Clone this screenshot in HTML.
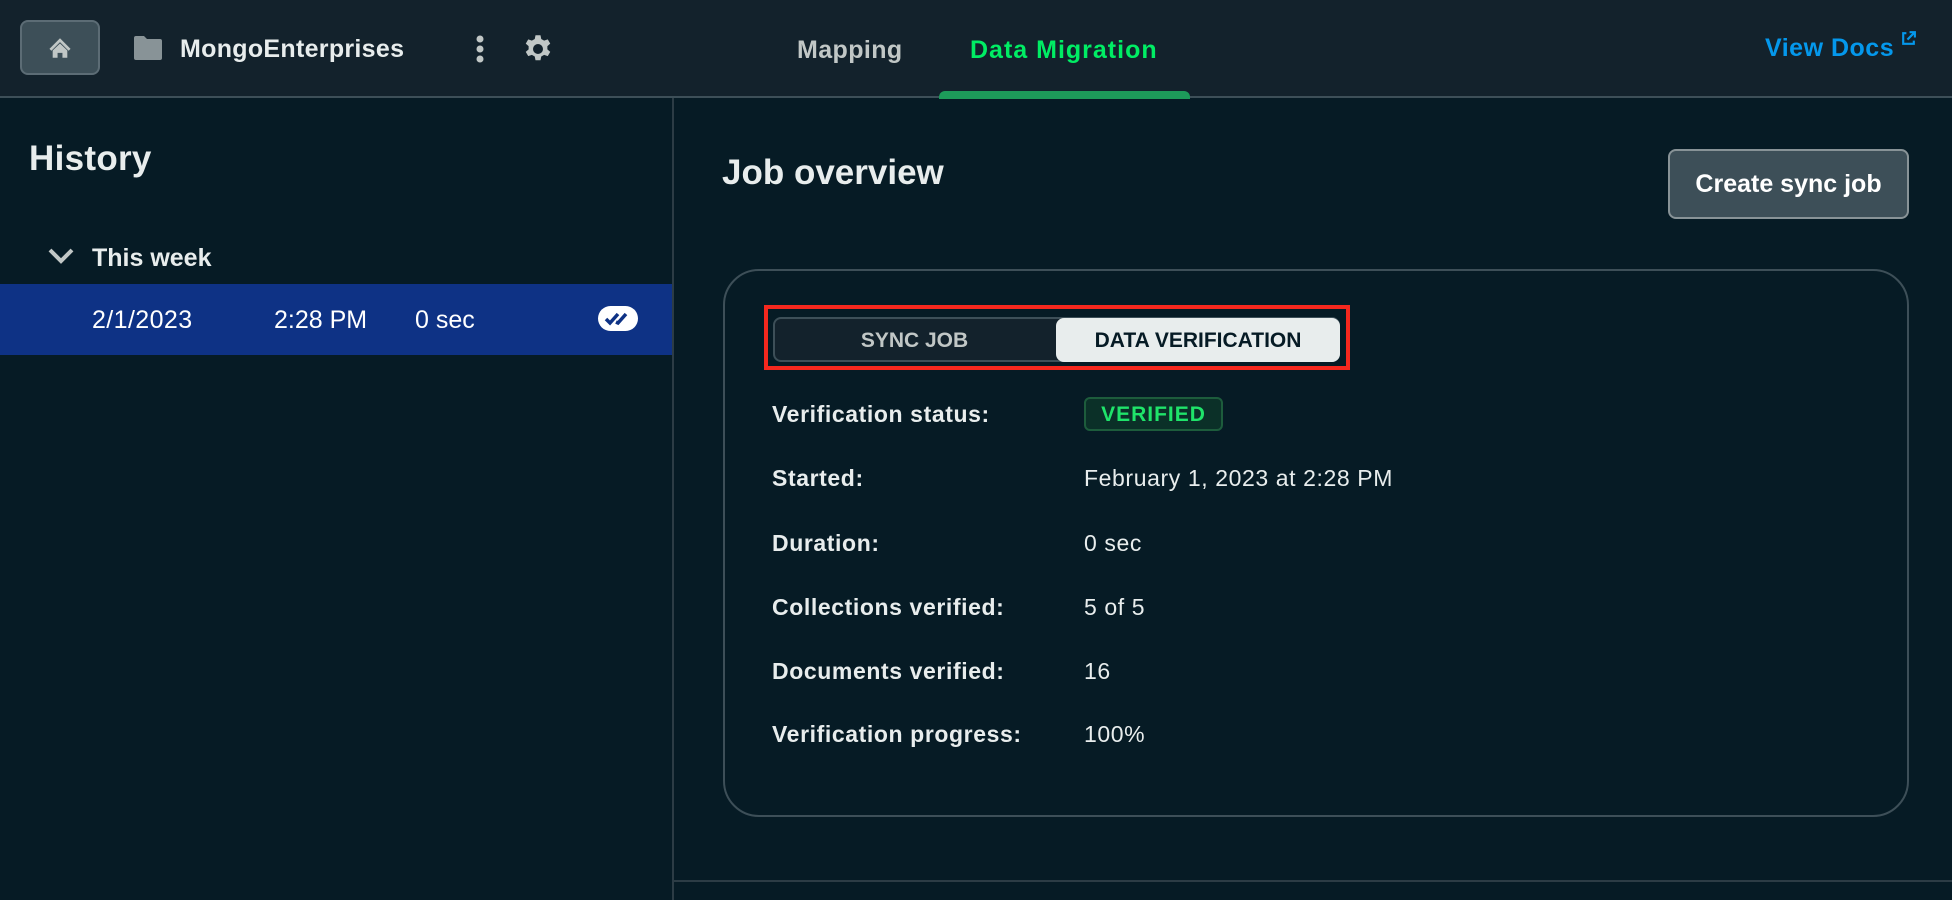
<!DOCTYPE html>
<html><head><meta charset="utf-8"><style>
*{margin:0;padding:0;box-sizing:border-box}
body{width:1952px;height:900px;background:#061b25;font-family:"Liberation Sans",sans-serif;color:#e8eded;position:relative;overflow:hidden}
.abs{position:absolute}
.hdr{left:0;top:0;width:1952px;height:98px;background:#13222c;border-bottom:2px solid #3d4f58}
.b{font-weight:bold}
.row{left:772px;font-size:23px;font-weight:bold;color:#e8eded;letter-spacing:0.6px}
.val{left:1084px;font-size:23px;color:#e8eded;letter-spacing:0.6px}
</style></head><body>
<div class="abs hdr"></div>
<div class="abs" style="left:20px;top:20px;width:80px;height:55px;border:2px solid #5c6c75;border-radius:8px;background:#3d4f58"></div>
<svg class="abs" style="left:47px;top:35px" width="26" height="26" viewBox="0 0 16 16"><path d="M8 2L1.5 8.5l1.2 1.2L8 4.4l5.3 5.3 1.2-1.2z" fill="#c1c7c6"/><path d="M3.5 9.5L8 5.2l4.5 4.3V14H9.5v-3h-3v3h-3z" fill="#c1c7c6"/></svg>
<svg class="abs" style="left:134px;top:36px" width="28" height="24" viewBox="0 0 28 24"><path d="M0 2a2 2 0 012-2h8l3 3h13a2 2 0 012 2v17a2 2 0 01-2 2H2a2 2 0 01-2-2z" fill="#889397"/></svg>
<div class="abs b" style="left:180px;top:35px;font-size:25px;color:#e8eded;letter-spacing:0.3px">MongoEnterprises</div>
<svg class="abs" style="left:474px;top:34px" width="12" height="30"><circle cx="6" cy="5" r="3.5" fill="#c1c7c6"/><circle cx="6" cy="15" r="3.5" fill="#c1c7c6"/><circle cx="6" cy="25" r="3.5" fill="#c1c7c6"/></svg>
<svg class="abs" style="left:523px;top:34px" width="30" height="30" viewBox="0 0 24 24"><path fill="#c1c7c6" fill-rule="evenodd" d="M10 1h4l.6 3 2.3 1.3 2.9-1 2 3.4-2.3 2v2.6l2.3 2-2 3.4-2.9-1-2.3 1.3-.6 3h-4l-.6-3-2.3-1.3-2.9 1-2-3.4 2.3-2V9.7l-2.3-2 2-3.4 2.9 1L9.4 4zM12 8a4 4 0 100 8 4 4 0 000-8z"/></svg>
<div class="abs b" style="left:797px;top:36px;font-size:25px;color:#c1c7c6;letter-spacing:0.4px">Mapping</div>
<div class="abs b" style="left:970px;top:36px;font-size:25px;color:#00ed64;letter-spacing:1px">Data Migration</div>
<div class="abs" style="left:939px;top:91px;width:251px;height:8px;background:#1d9b5a;border-radius:6px 6px 0 0"></div>
<div class="abs b" style="left:1765px;top:34px;font-size:25px;color:#0498ec;letter-spacing:0.5px">View Docs</div>
<svg class="abs" style="left:1900px;top:30px" width="17" height="17" viewBox="0 0 16 16"><path d="M6 3H3v10h10v-3" stroke="#0498ec" stroke-width="2" fill="none"/><path d="M9 2h5v5M14 2L7 9" stroke="#0498ec" stroke-width="2" fill="none"/></svg>

<div class="abs" style="left:672px;top:98px;width:2px;height:802px;background:#2c3c45"></div>
<div class="abs" style="left:674px;top:880px;width:1278px;height:2px;background:#2c3c45"></div>

<div class="abs b" style="left:29px;top:139px;font-size:35px;letter-spacing:0.3px">History</div>
<svg class="abs" style="left:47px;top:246px" width="28" height="20" viewBox="0 0 28 20"><path d="M3 4l11 11L25 4" stroke="#c1c7c6" stroke-width="4" fill="none"/></svg>
<div class="abs b" style="left:92px;top:244px;font-size:25px">This week</div>
<div class="abs" style="left:0;top:284px;width:672px;height:71px;background:#0e3285"></div>
<div class="abs" style="left:92px;top:306px;font-size:25px;color:#fff;letter-spacing:0.4px">2/1/2023</div>
<div class="abs" style="left:274px;top:306px;font-size:25px;color:#fff">2:28 PM</div>
<div class="abs" style="left:415px;top:306px;font-size:25px;color:#fff">0 sec</div>
<svg class="abs" style="left:598px;top:306px" width="40" height="25" viewBox="0 0 40 25"><rect width="40" height="25" rx="12.5" fill="#fff"/><path d="M8 13l4 4 8-9M18 16l2 1 8-9" stroke="#0e3285" stroke-width="3.5" fill="none"/></svg>

<div class="abs b" style="left:722px;top:153px;font-size:35px">Job overview</div>
<div class="abs b" style="left:1668px;top:149px;width:241px;height:70px;background:#3d4f58;border:2px solid #889397;border-radius:8px;font-size:25px;text-align:center;line-height:66px;color:#fff">Create sync job</div>
<div class="abs" style="left:723px;top:269px;width:1186px;height:548px;border:2px solid #3d4f58;border-radius:36px"></div>
<div class="abs" style="left:764px;top:305px;width:586px;height:65px;border:4px solid #f5281e"></div>
<div class="abs" style="left:773px;top:317px;width:567px;height:45px;background:#13222c;border:2px solid #3d4f58;border-radius:8px"></div>
<div class="abs b" style="left:773px;top:318px;width:283px;height:45px;line-height:45px;text-align:center;font-size:21px;color:#c1c7c6">SYNC JOB</div>
<div class="abs b" style="left:1056px;top:318px;width:284px;height:44px;line-height:46px;text-align:center;font-size:21px;color:#061b25;background:#e8eded;border-radius:8px">DATA VERIFICATION</div>

<div class="abs row" style="top:401px">Verification status:</div>
<div class="abs b" style="left:1084px;top:397px;width:139px;height:34px;border:2px solid #1d5c3c;background:#0b3028;border-radius:6px;color:#1fe36a;font-size:21px;text-align:center;line-height:32px;letter-spacing:1px">VERIFIED</div>
<div class="abs row" style="top:465px">Started:</div>
<div class="abs val" style="top:465px">February 1, 2023 at 2:28 PM</div>
<div class="abs row" style="top:530px">Duration:</div>
<div class="abs val" style="top:530px">0 sec</div>
<div class="abs row" style="top:594px">Collections verified:</div>
<div class="abs val" style="top:594px">5 of 5</div>
<div class="abs row" style="top:658px">Documents verified:</div>
<div class="abs val" style="top:658px">16</div>
<div class="abs row" style="top:721px">Verification progress:</div>
<div class="abs val" style="top:721px">100%</div>
</body></html>
